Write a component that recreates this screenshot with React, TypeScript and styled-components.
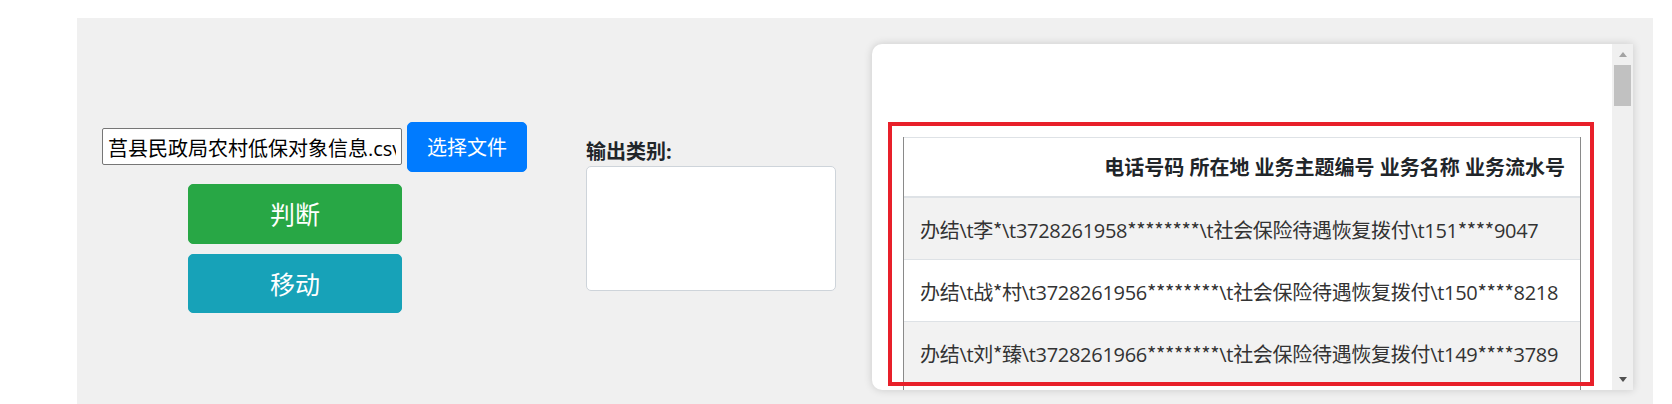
import React from "react";
import styled, { createGlobalStyle } from "styled-components";

const GlobalStyle = createGlobalStyle`
  html, body { margin: 0; padding: 0; overflow: hidden; background: #ffffff; }
  body {
    font-family: "Open Sans", "Noto Sans CJK SC", sans-serif;
    color: #212529;
  }
  * { box-sizing: border-box; }
`;

const FONT = `"Open Sans", "Noto Sans CJK SC", sans-serif`;

const Page = styled.div`
  padding: 18px 19px 0 77px;
`;

const Panel = styled.div`
  background: #f0f0f0;
  height: 398px;
  padding: 0 20px 0 25px;
  display: flex;
  align-items: center;
`;

const LeftCol = styled.div`
  display: flex;
  flex-direction: column;
  align-items: flex-start;
  width: 425px;
`;

const FileRow = styled.div`
  display: flex;
  align-items: center;
  gap: 5px;
`;

const FileName = styled.input`
  width: 300px;
  height: 37px;
  border: 1px solid #767676;
  border-radius: 2px;
  padding: 1px 5px 0;
  font-family: ${FONT};
  font-size: 20px;
  color: #000;
  background: #fff;
  outline: none;
`;

const Btn = styled.button<{ $bg: string; $w: number; $h: number; $fs: number }>`
  width: ${(p) => p.$w}px;
  height: ${(p) => p.$h}px;
  background: ${(p) => p.$bg};
  border: 1px solid ${(p) => p.$bg};
  border-radius: 5px;
  color: #fff;
  font-family: ${FONT};
  font-size: ${(p) => p.$fs}px;
  line-height: 1.5;
  padding: 3px 0 0;
  cursor: pointer;
`;

const ActionStack = styled.div`
  display: flex;
  flex-direction: column;
  gap: 10px;
  margin: 12px 0 0 86px;
`;

const OutputGroup = styled.div`
  width: 250px;
  margin: 0 36px 0 59px;
  padding-bottom: 8px;
`;

const Label = styled.label`
  display: block;
  font-family: ${FONT};
  font-weight: 700;
  font-size: 20px;
  line-height: 28px;
  padding-top: 2px;
  color: #212529;
`;

const OutputBox = styled.textarea`
  display: block;
  width: 250px;
  height: 125px;
  border: 1px solid #ced4da;
  border-radius: 5px;
  background: #fff;
  resize: none;
  outline: none;
`;

const CardFrame = styled.div`
  position: relative;
  width: 761px;
  height: 346px;
  background: #fff;
  border-radius: 10px 0 0 10px;
  box-shadow: 0 0 8px rgba(0, 0, 0, 0.16);
  display: flex;
  overflow: hidden;
`;

const Viewport = styled.div`
  flex: 1;
  min-width: 0;
  overflow: hidden;
  padding: 93px 31px 0 31px;
`;

const Table = styled.table`
  width: 100%;
  table-layout: fixed;
  border-collapse: separate;
  border-spacing: 0;
  border-left: 1px solid #8a8a8a;
  border-right: 1px solid #8a8a8a;
  font-family: ${FONT};
  font-size: 20px;
  line-height: 30px;
  color: #212529;
`;

const HeadCell = styled.th`
  text-align: right;
  font-weight: 700;
  padding: 15px 15px 13px;
  border-top: 1px solid #dee2e6;
  border-bottom: 2px solid #dee2e6;
  white-space: nowrap;
  overflow: hidden;
`;

const Row = styled.tr`
  &:nth-child(odd) { background: #f2f2f2; }
`;

const Cell = styled.td`
  padding: 17px 15px 13px 16px;
  border-bottom: 1px solid #dee2e6;
  white-space: nowrap;
  overflow: hidden;
  letter-spacing: -0.3px;
  color: #333;
`;

const Mask = styled.span`
  font-family: "Noto Sans CJK SC", sans-serif;
`;

const ScrollTrack = styled.div`
  width: 21px;
  flex: none;
  background: #f0f0f0;
  display: flex;
  flex-direction: column;
`;

const ScrollButton = styled.div`
  height: 21px;
  display: flex;
  align-items: center;
  justify-content: center;
`;

const Arrow = styled.span<{ $dir: "up" | "down"; $color: string }>`
  width: 0;
  height: 0;
  border-left: 4.5px solid transparent;
  border-right: 4.5px solid transparent;
  ${(p) =>
    p.$dir === "up"
      ? `border-bottom: 5px solid ${p.$color};`
      : `border-top: 5px solid ${p.$color};`}
`;

const Thumb = styled.div`
  height: 41px;
  margin: 0 2px;
  background: #c1c1c1;
`;

const Spacer = styled.div`
  flex: 1;
`;

const Annotation = styled.div`
  position: absolute;
  left: 16px;
  top: 78px;
  width: 706px;
  height: 264px;
  border: 4px solid #e8202a;
  pointer-events: none;
`;

const baseRows = [
  "办结\\t李*\\t3728261958********\\t社会保险待遇恢复拨付\\t151****9047",
  "办结\\t战*村\\t3728261956********\\t社会保险待遇恢复拨付\\t150****8218",
  "办结\\t刘*臻\\t3728261966********\\t社会保险待遇恢复拨付\\t149****3789",
];

const names = ["王*", "张*芳", "赵*明", "孙*华", "周*", "吴*强", "郑*兰", "陈*军", "杨*", "黄*英"];

const rows: string[] = [
  ...baseRows,
  ...Array.from({ length: 36 }, (_, i) => {
    const n = names[i % names.length];
    const id = 3728261940 + ((i * 7) % 30);
    const p1 = 130 + ((i * 3) % 60);
    const p2 = String(1000 + ((i * 1237) % 9000));
    return `办结\\t${n}\\t${id}********\\t社会保险待遇恢复拨付\\t${p1}****${p2}`;
  }),
];

function RecordText({ text }: { text: string }) {
  const parts = text.split(/(\*+)/);
  return (
    <>
      {parts.map((part, i) =>
        part.startsWith("*") ? <Mask key={i}>{part}</Mask> : <React.Fragment key={i}>{part}</React.Fragment>
      )}
    </>
  );
}

export default function App() {
  return (
    <>
      <GlobalStyle />
      <Page>
        <Panel>
          <LeftCol>
            <FileRow>
              <FileName readOnly value="莒县民政局农村低保对象信息.csv" />
              <Btn $bg="#007bff" $w={120} $h={50} $fs={20}>
                选择文件
              </Btn>
            </FileRow>
            <ActionStack>
              <Btn $bg="#28a745" $w={214} $h={60} $fs={25}>
                判断
              </Btn>
              <Btn $bg="#17a2b8" $w={214} $h={59} $fs={25}>
                移动
              </Btn>
            </ActionStack>
          </LeftCol>
          <OutputGroup>
            <Label>输出类别:</Label>
            <OutputBox />
          </OutputGroup>
          <CardFrame>
            <Viewport>
              <Table>
                <thead>
                  <tr>
                    <HeadCell>电话号码 所在地 业务主题编号 业务名称 业务流水号</HeadCell>
                  </tr>
                </thead>
                <tbody>
                  {rows.map((r, i) => (
                    <Row key={i}>
                      <Cell>
                        <RecordText text={r} />
                      </Cell>
                    </Row>
                  ))}
                </tbody>
              </Table>
            </Viewport>
            <ScrollTrack>
              <ScrollButton>
                <Arrow $dir="up" $color="#a3a3a3" />
              </ScrollButton>
              <Thumb />
              <Spacer />
              <ScrollButton>
                <Arrow $dir="down" $color="#505050" />
              </ScrollButton>
            </ScrollTrack>
            <Annotation />
          </CardFrame>
        </Panel>
      </Page>
    </>
  );
}
